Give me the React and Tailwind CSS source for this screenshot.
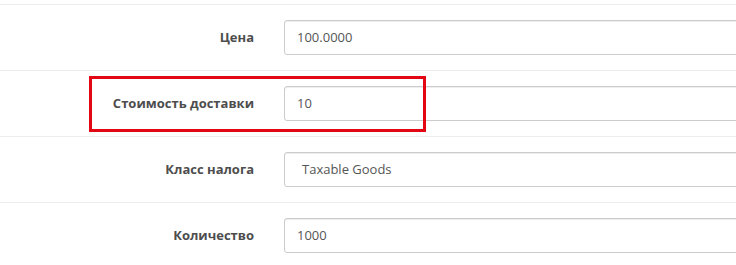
export default function App() {
  const rows = [
    { label: 'Цена', value: '100.0000' },
    { label: 'Стоимость доставки', value: '10' },
    { label: 'Класс налога', value: 'Taxable Goods', select: true },
    { label: 'Количество', value: '1000' },
  ];

  return (
    <div
      className="relative w-[736px] h-[265px] overflow-hidden bg-white pt-[4px]"
      style={{ fontFamily: '"Open Sans", "Liberation Sans", sans-serif' }}
    >
      {rows.map((row) => (
        <div key={row.label} className="flex items-center border-t border-[#ededed] py-[15px]">
          <div className="w-[269px] shrink-0 pr-[15px] text-right text-[13px] font-bold text-[#4d4d4d]">
            {row.label}
          </div>
          <div className="shrink-0 pl-[15px]">
            <div
              className={`flex h-[35px] w-[600px] items-center rounded-[3px] border border-[#cccccc] text-[13px] text-[#555555] shadow-[inset_0_1px_1px_rgba(0,0,0,0.075)] ${
                row.select ? 'pl-[17px]' : 'pl-[12px]'
              }`}
            >
              {row.value}
            </div>
          </div>
        </div>
      ))}

      {/* annotation box */}
      <div className="absolute left-[89px] top-[76px] h-[56px] w-[337px] border-[3px] border-[#e30613]" />
    </div>
  );
}
